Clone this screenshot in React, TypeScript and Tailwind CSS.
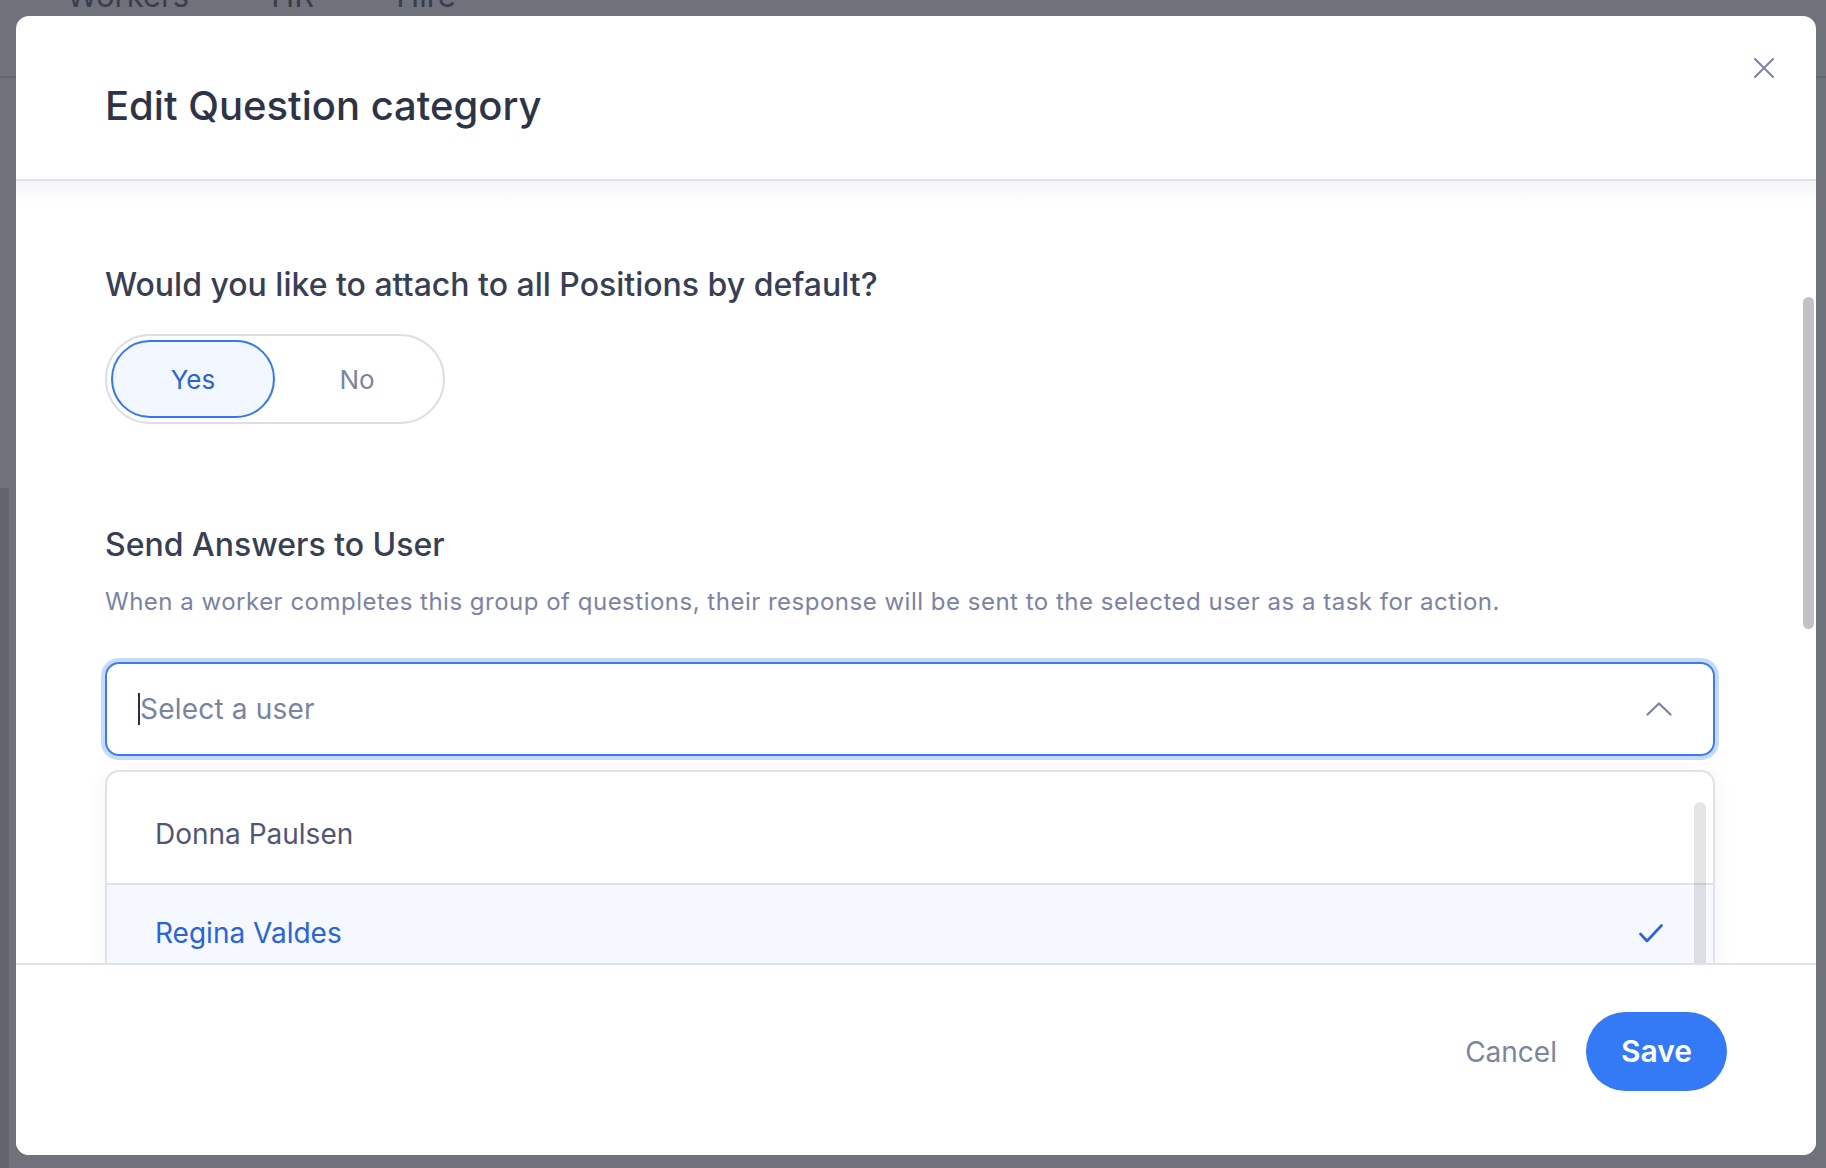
import React from "react";

const CloseIcon = () => (
    <svg width="22" height="22" viewBox="0 0 22 22" fill="none" stroke="#7f87a8" strokeWidth="2.2" strokeLinecap="round">
        <path d="M2 2L20 20M20 2L2 20"/>
    </svg>
)

const ChevronUp = () => (
    <svg width="26" height="14" viewBox="0 0 26 14" fill="none" stroke="#7a82a0" strokeWidth="2.2" strokeLinecap="round" strokeLinejoin="round">
        <path d="M1.5 12.5L13 1.5L24.5 12.5"/>
    </svg>
)

const CheckIcon = () => (
    <svg width="24" height="19" viewBox="0 0 24 19" fill="none" stroke="#2b63d9" strokeWidth="2.6" strokeLinecap="round" strokeLinejoin="round">
        <path d="M1.5 10L8 17L22.5 1.5"/>
    </svg>
)

const users = [
    {name: "Donna Paulsen", selected: false},
    {name: "Regina Valdes", selected: true},
]

export default function App() {
    return (
        <div className="relative w-[1826px] h-[1168px] overflow-hidden bg-[#6f717b] font-['Inter',sans-serif]">
            {/* page behind the overlay */}
            <div className="h-[78px] border-b-2 border-[#63656f] overflow-hidden">
                <div className="flex gap-[82px] pl-[67px] -mt-[23px] text-[31px] leading-[38px] text-[#393d4c]">
                    <span>Workers</span>
                    <span>HR</span>
                    <span>Hire</span>
                </div>
            </div>
            <div className="w-[9px] h-[680px] mt-[410px] bg-[#62646e]"/>

            <div className="absolute left-[16px] top-[16px] w-[1800px] h-[1139px] bg-white rounded-[13px] flex flex-col overflow-hidden">
                {/* header */}
                <div className="relative h-[165px] shrink-0 border-b-2 border-[#dfe2ea] pl-[89px] pt-[66px]">
                    <h1 className="text-[40px] leading-[48px] font-medium text-[#2e3447]">Edit Question category</h1>
                    <button className="absolute top-[41px] right-[41px]">
                        <CloseIcon/>
                    </button>
                </div>

                {/* body */}
                <div className="relative flex-1 overflow-hidden pl-[89px] pr-[101px] pt-[84px]">
                    <div className="absolute left-0 right-0 top-0 h-[22px] bg-gradient-to-b from-[#f4f5f8] to-white"/>
                    <div className="relative">
                        <p className="text-[32px] leading-[40px] font-medium text-[#383f55]">
                            Would you like to attach to all Positions by default?
                        </p>
                        <div className="mt-[29px] w-[340px] h-[90px] rounded-full border-2 border-[#dcdfe8] p-[4px] flex items-center">
                            <button className="w-[164px] h-full rounded-full border-2 border-[#3578f0] bg-[#f1f6ff] text-[26px] text-[#2a63d6]">
                                Yes
                            </button>
                            <button className="flex-1 h-full text-[26px] text-[#7d849f]">No</button>
                        </div>

                        <h2 className="mt-[101px] text-[32px] leading-[40px] font-medium text-[#383f55]">Send Answers to User</h2>
                        <p className="mt-[21px] text-[24px] leading-[32px] tracking-[0.5px] text-[#7a83a3]">
                            When a worker completes this group of questions, their response will be sent to the selected user as a task for action.
                        </p>

                        <div className="mt-[44px] h-[94px] rounded-[14px] border-2 border-[#3a7bf3] ring-4 ring-[#c6dafb] flex items-center pl-[31px] pr-[41px]">
                            <span className="w-[2px] h-[32px] bg-[#2b2f3d]"/>
                            <span className="flex-1 text-[28px] text-[#7b83a3] tracking-[0.2px]">Select a user</span>
                            <ChevronUp/>
                        </div>

                        <div className="relative mt-[14px] rounded-t-[14px] border-2 border-b-0 border-[#e0e2ea] shadow-[0_6px_20px_rgba(40,50,80,0.07)] pt-[13px]">
                            {users.map((u, i) => (
                                <div key={u.name}
                                     className={`h-[98px] flex items-center pl-[48px] pr-[50px] ${i > 0 ? "border-t-2 border-[#dfe2ea]" : ""} ${u.selected ? "bg-[#f5f8fe] text-[#2b63d9]" : "text-[#4f5777]"}`}>
                                    <span className="flex-1 text-[28px]">{u.name}</span>
                                    {u.selected && <CheckIcon/>}
                                </div>
                            ))}
                            <div className="absolute right-[7px] top-[30px] w-[12px] h-[300px] rounded-full bg-black/10"/>
                        </div>
                    </div>
                    <div className="absolute right-[2px] top-[116px] w-[11px] h-[332px] rounded-full bg-[#c2c2c2]"/>
                </div>

                {/* footer */}
                <div className="h-[192px] shrink-0 border-t-2 border-[#dfe2ea] bg-white flex justify-end items-start gap-[29px] pr-[89px] pt-[47px]">
                    <button className="h-[79px] text-[28px] text-[#7c84a0]">Cancel</button>
                    <button className="h-[79px] px-[35px] rounded-full bg-[#347af6] text-white text-[30px] font-semibold">Save</button>
                </div>
            </div>
        </div>
    )
}
